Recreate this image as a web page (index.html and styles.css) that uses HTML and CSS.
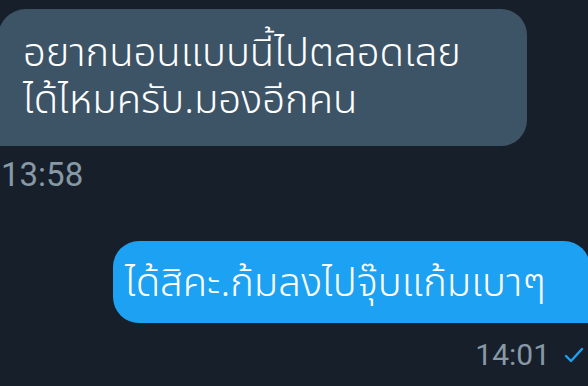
FILE: index.html
```html
<!DOCTYPE html>
<html lang="th">

<head>
  <meta charset="UTF-8">
  <meta name="viewport" content="width=device-width, initial-scale=1.0">
  <title>แชท</title>
  <link rel="stylesheet" href="styles.css">
</head>

<body>
  <div class="chat">
    <div class="row row-in">
      <div class="bubble bubble-in">อยากนอนแบบนี้ไปตลอดเลย<br>ได้ไหมครับ.มองอีกคน</div>
      <div class="time">13:58</div>
    </div>
    <div class="row row-out">
      <div class="bubble bubble-out">ได้สิคะ.ก้มลงไปจุ๊บแก้มเบาๆ</div>
      <div class="time">14:01
        <svg class="check" width="20" height="16" viewBox="0 0 20 16">
          <path d="M2 9 L7 14 L18 2" fill="none" stroke="#1da1f2" stroke-width="2.4" stroke-linecap="round" stroke-linejoin="round" />
        </svg>
      </div>
    </div>
  </div>
</body>

</html>
```
FILE: styles.css
```css
* {
  margin: 0;
  padding: 0;
  box-sizing: border-box;
}

body {
  background-color: #17202a;
  font-family: Roboto, "Noto Sans", sans-serif;
  width: 588px;
  height: 386px;
  overflow: hidden;
}

.chat {
  display: flex;
  flex-direction: column;
  padding-top: 9px;
}

.row {
  display: flex;
  flex-direction: column;
}

.row-in {
  align-items: flex-start;
}

.row-out {
  align-items: flex-end;
  margin-top: 49px;
}

.bubble {
  color: #fff;
  font-family: "Noto Sans Thai", "Noto Sans", sans-serif;
  font-size: 40px;
  font-weight: 350;
  line-height: 47px;
  white-space: nowrap;
}

/* ข้อความที่ได้รับ */
.bubble-in {
  width: 529px;
  height: 137px;
  margin-left: -2px;
  padding: 22px 0 0 25px;
  background-color: #3d5466;
  border-radius: 28px 26px 26px 0;
}

/* ข้อความที่ส่ง */
.bubble-out {
  width: 477px;
  height: 82px;
  margin-right: -2px;
  padding: 5px 0 0 12px;
  display: flex;
  align-items: center;
  background-color: #1da1f2;
  border-radius: 26px 26px 0 26px;
}

.time {
  color: #8899a6;
  font-size: 30px;
  line-height: 34px;
  display: flex;
  align-items: center;
}

.row-in .time {
  font-size: 33px;
  margin: 12px 0 0 1px;
}

.row-out .time {
  margin: 15px 4px 0 0;
}

.check {
  margin-left: 14px;
}
```
